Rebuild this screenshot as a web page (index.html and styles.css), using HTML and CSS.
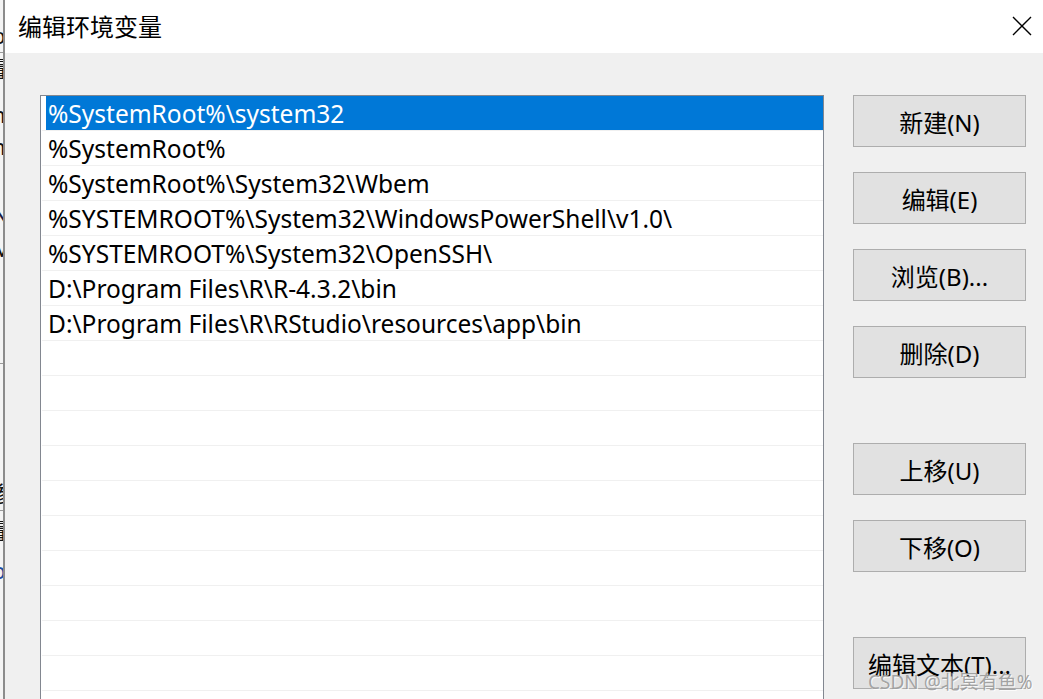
FILE: index.html
```html
<!DOCTYPE html>
<html lang="zh-CN">
<head>
<meta charset="utf-8">
<title>编辑环境变量</title>
<link rel="stylesheet" href="styles.css">
</head>
<body>
<div class="screen">
  <div class="behind">
    <div class="behind-inner">
      <div class="frag f-b">b</div>
      <div class="frag-line"></div>
      <div class="frag f-liang">量</div>
      <div class="frag f-n1">n</div>
      <div class="frag f-n2">n</div>
      <div class="frag f-t">t</div>
      <div class="frag f-N">N</div>
      <div class="frag f-M">M</div>
      <div class="frag-line gap-line"></div>
      <div class="frag f-can">参</div>
      <div class="frag-line"></div>
      <div class="frag f-liang2">量</div>
      <div class="frag f-p">p</div>
      <div class="frag f-i">i</div>
    </div>
  </div>
  <div class="dialog">
    <div class="titlebar">
      <div class="title">编辑环境变量</div>
      <div class="close">
        <svg width="20" height="20" viewBox="0 0 20 20"><path d="M1 1 L19 19 M19 1 L1 19" stroke="#000" stroke-width="1.4" fill="none"/></svg>
      </div>
    </div>
    <div class="body">
      <div class="list">
        <div class="row selected"><span class="cell">%SystemRoot%\system32</span></div>
        <div class="row"><span class="cell">%SystemRoot%</span></div>
        <div class="row"><span class="cell">%SystemRoot%\System32\Wbem</span></div>
        <div class="row"><span class="cell">%SYSTEMROOT%\System32\WindowsPowerShell\v1.0\</span></div>
        <div class="row"><span class="cell">%SYSTEMROOT%\System32\OpenSSH\</span></div>
        <div class="row"><span class="cell">D:\Program Files\R\R-4.3.2\bin</span></div>
        <div class="row"><span class="cell">D:\Program Files\R\RStudio\resources\app\bin</span></div>
        <div class="row"><span class="cell"></span></div>
        <div class="row"><span class="cell"></span></div>
        <div class="row"><span class="cell"></span></div>
        <div class="row"><span class="cell"></span></div>
        <div class="row"><span class="cell"></span></div>
        <div class="row"><span class="cell"></span></div>
        <div class="row"><span class="cell"></span></div>
        <div class="row"><span class="cell"></span></div>
        <div class="row"><span class="cell"></span></div>
        <div class="row"><span class="cell"></span></div>
      </div>
      <div class="buttons">
        <button class="btn">新建(N)</button>
        <button class="btn">编辑(E)</button>
        <button class="btn">浏览(B)...</button>
        <button class="btn">删除(D)</button>
        <button class="btn group">上移(U)</button>
        <button class="btn">下移(O)</button>
        <button class="btn group">编辑文本(T)...</button>
      </div>
    </div>
  </div>
  <div class="watermark">CSDN @北冥有鱼%</div>
</div>
</body>
</html>
```

FILE: styles.css
```css
html, body {
  margin: 0;
  padding: 0;
}
body {
  width: 1043px;
  height: 699px;
  overflow: hidden;
  background: #f0f0f0;
  font-family: "Noto Sans", "Noto Sans CJK SC", sans-serif;
  color: #000;
}
.screen {
  position: relative;
  display: flex;
  width: 1043px;
  height: 699px;
}
.behind {
  width: 3px;
  flex: none;
  overflow: hidden;
  background: #f4f4f4;
  border-right: 2px solid #8c8c8c;
}
.behind-inner {
  width: 30px;
  margin-left: -8px;
  font-size: 22px;
  line-height: 1;
  color: #111;
}
.frag { height: 24px; text-align: left; }
.frag-line { height: 1px; background: #9a9a9a; margin: 4px 0; }
.f-b { margin-top: 24px; }
.f-liang { margin-top: 4px; }
.f-n1 { margin-top: 22px; }
.f-n2 { margin-top: 8px; }
.f-t { margin-top: 10px; }
.f-N { margin-top: 10px; color: #1a1a40; }
.f-M { margin-top: 10px; }
.gap-line { margin-top: 102px; }
.f-can { margin-top: 118px; }
.f-liang2 { margin-top: 8px; }
.f-p { margin-top: 16px; color: #1a4aa0; }
.f-i { margin-top: 12px; color: #802020; }

.dialog {
  flex: 1;
  display: flex;
  flex-direction: column;
  background: #f0f0f0;
}
.titlebar {
  height: 53px;
  flex: none;
  background: #fff;
  display: flex;
  align-items: center;
  justify-content: space-between;
}
.title {
  padding-left: 13px;
  font-size: 24px;
  font-family: "Noto Sans CJK SC", sans-serif;
  margin-top: -2px;
}
.close {
  width: 20px;
  height: 20px;
  margin-right: 11px;
  margin-top: -1px;
}
.close svg { display: block; }

.body {
  flex: 1;
  display: flex;
  align-items: flex-start;
  padding: 42px 0 0 35px;
  overflow: hidden;
}
.list {
  width: 781px;
  flex: none;
  background: #fff;
  border: 1px solid #828790;
  border-bottom: none;
  padding: 0 0 0 1px;
  height: 620px;
  overflow: hidden;
}
.row {
  height: 34px;
  border-bottom: 1px solid #f0f0f0;
  display: flex;
  padding-left: 4px;
}
.cell {
  flex: 1;
  display: flex;
  align-items: center;
  padding-left: 2px;
  font-size: 24.5px;
  white-space: nowrap;
}
.row.selected .cell {
  background: #0078d7;
  color: #fff;
}
.buttons {
  margin-left: 29px;
  width: 173px;
  flex: none;
  display: flex;
  flex-direction: column;
  gap: 25px;
}
.btn {
  height: 52px;
  width: 173px;
  margin: 0;
  background: #e1e1e1;
  border: 1px solid #adadad;
  font-family: "Noto Sans", "Noto Sans CJK SC", sans-serif;
  font-size: 24px;
  color: #000;
  padding: 0;
  display: flex;
  align-items: center;
  justify-content: center;
}
.btn.group { margin-top: 40px; }
.watermark {
  position: absolute;
  left: 868px;
  top: 667px;
  font-size: 19px;
  font-family: "Noto Sans", "Noto Sans CJK SC", sans-serif;
  color: rgba(150, 150, 150, 0.85);
  text-shadow: 1px 1px 0 rgba(255, 255, 255, 0.8);
  white-space: nowrap;
}
```
